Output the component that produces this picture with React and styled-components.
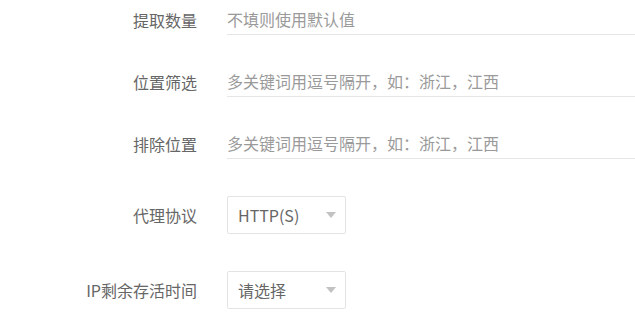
import React from "react";
import styled, { createGlobalStyle } from "styled-components";

const GlobalStyle = createGlobalStyle`
    body {
        margin: 0;
        background: #fff;
        font-family: "Noto Sans CJK SC", "Liberation Sans", sans-serif;
        overflow: hidden;
    }
`;

const Form = styled.form`
    display: flex;
    flex-direction: column;
    width: 635px;
`;

const FormRow = styled.div`
    display: flex;
    flex-direction: row;
    align-items: center;
    margin-bottom: ${(p) => p.gap}px;
`;

const Label = styled.label`
    flex-shrink: 0;
    width: 197px;
    margin-right: 30px;
    padding-top: ${(p) => (p.underline ? 4 : 0)}px;
    text-align: right;
    font-size: 16px;
    line-height: 30px;
    color: #666;
    white-space: nowrap;
`;

const TextInput = styled.input`
    flex: 1;
    min-width: 0;
    box-sizing: border-box;
    height: 35px;
    padding: 4px 0 0;
    border: none;
    border-bottom: 1px solid #e6e6e6;
    outline: none;
    background: transparent;
    font-family: inherit;
    font-size: 16px;
    line-height: 30px;
    color: #666;

    &::placeholder {
        color: #9a9a9a;
    }
`;

const Select = styled.div`
    box-sizing: border-box;
    display: flex;
    align-items: center;
    justify-content: space-between;
    width: 119px;
    height: 38px;
    padding: 0 9px 0 10px;
    border: 1px solid #e3e3e3;
    border-radius: 2px;
    font-size: 16px;
    color: #666;
    cursor: pointer;
`;

const Arrow = styled.span`
    width: 0;
    height: 0;
    border-left: 5.5px solid transparent;
    border-right: 5.5px solid transparent;
    border-top: 6px solid #c2c2c2;
`;

const App = () => {
    return (
        <>
            <GlobalStyle />
            <Form>
                <FormRow gap={27}>
                    <Label underline>提取数量</Label>
                    <TextInput placeholder="不填则使用默认值" />
                </FormRow>
                <FormRow gap={27}>
                    <Label underline>位置筛选</Label>
                    <TextInput placeholder="多关键词用逗号隔开，如：浙江，江西" />
                </FormRow>
                <FormRow gap={37}>
                    <Label underline>排除位置</Label>
                    <TextInput placeholder="多关键词用逗号隔开，如：浙江，江西" />
                </FormRow>
                <FormRow gap={37}>
                    <Label>代理协议</Label>
                    <Select>
                        <span>HTTP(S)</span>
                        <Arrow />
                    </Select>
                </FormRow>
                <FormRow gap={0}>
                    <Label>IP剩余存活时间</Label>
                    <Select>
                        <span>请选择</span>
                        <Arrow />
                    </Select>
                </FormRow>
            </Form>
        </>
    );
};

export default App;
